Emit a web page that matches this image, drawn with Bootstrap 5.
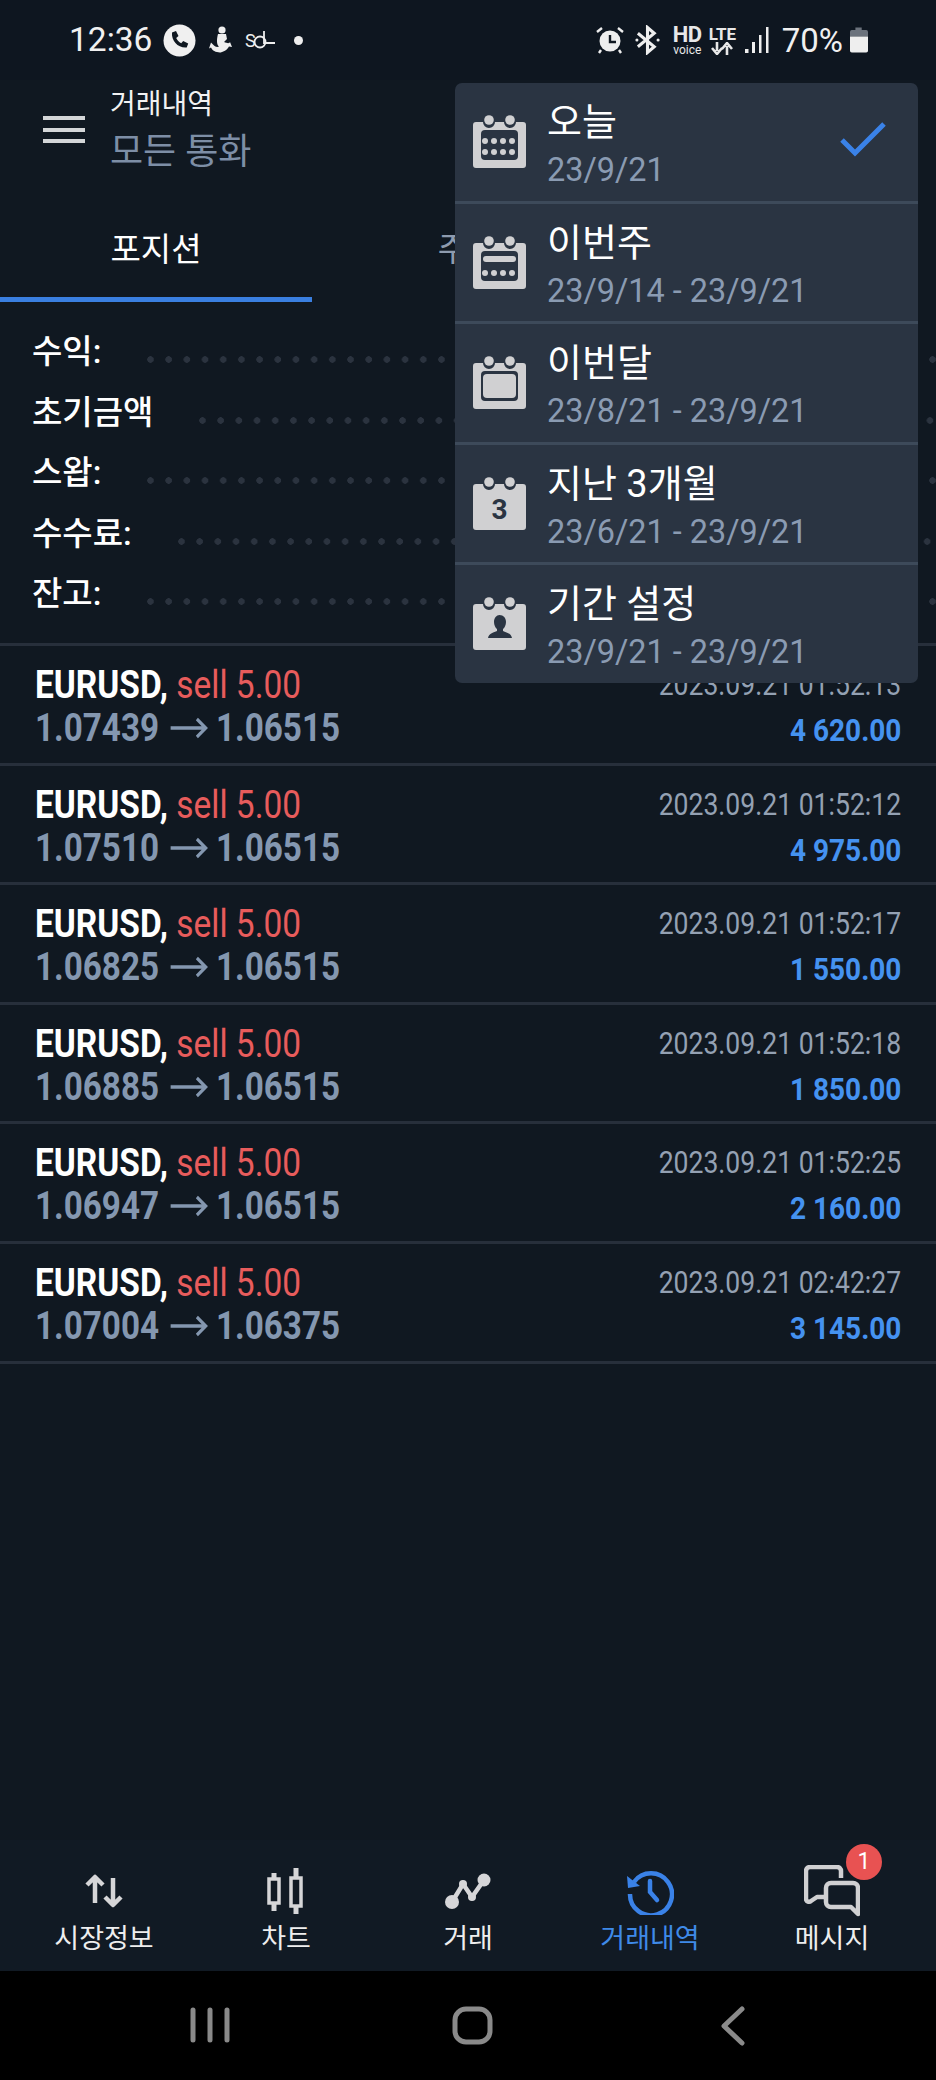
<!DOCTYPE html>
<html lang="ko">
<head>
  <meta charset="UTF-8">
  <meta name="viewport" content="width=device-width, initial-scale=1.0">
  <title>거래내역</title>
  <link href="https://cdn.jsdelivr.net/npm/bootstrap@5.3.0/dist/css/bootstrap.min.css" rel="stylesheet">
  <style>
    body { background: #101821; color: #fff; font-family: Roboto, "Noto Sans CJK KR", sans-serif; }
    .screen { width: 936px; height: 2080px; overflow: hidden; background: #101821; }
    .status-bar { height: 80px; padding: 0 68px 0 69px; background: #0e1620; }
    .status-time { font-size: 33.500px; color: #f0f0f0; line-height: 1; }
    .status-pct { font-size: 33px; color: #f0f0f0; line-height: 1; margin: 0 7px 0 13px; }
    .phone-ico { margin-left: 11px; }
    .anchor-ico { margin-left: 12px; }
    .sol-ico { margin-left: 11px; }
    .status-dot { width: 9px; height: 9px; background: #eee; margin-left: 19px; }
    .bt-ico { margin-left: 11px; }
    .hd-box { width: 29px; margin: 0 7px 0 13px; }
    .lte-box { width: 27px; margin-right: 9px; }
    .hd-text { font-size: 22px; font-weight: 700; line-height: 20px; color: #e8e8e8; letter-spacing: -.5px; }
    .voice-text { font-size: 12px; line-height: 11px; color: #e8e8e8; }
    .lte-text { font-size: 17px; font-weight: 700; line-height: 16px; color: #e8e8e8; }

    .top-head { height: 100px; padding-left: 43px; }
    .burger { width: 42px; height: 27px; border-top: 4px solid #d4d6d8; border-bottom: 4px solid #d4d6d8; position: relative; margin-top: -2px; }
    .burger::after { content: ""; position: absolute; left: 0; right: 0; top: 8px; height: 4px; background: #d4d6d8; }
    .head-title { font-size: 28px; line-height: 36px; color: #f2f2f2; margin-top: -2px; }
    .head-sub { font-size: 36px; line-height: 50px; color: #7d8ea6; margin-top: 4px; }
    .head-text { margin: 6px 0 0 25px; }

    .tabs-row { height: 122px; }
    .tab-item { width: 312px; padding-top: 46px; font-size: 33px; line-height: 48px; color: #8e9bae; text-align: center; }
    .tab-item.on { color: #fff; border-bottom: 5px solid #3a7fe0; }

    .summary-box { height: 344px; padding: 20px 0 0 32px; border-bottom: 3px solid #272f3b; }
    .sum-line { height: 60.5px; font-size: 33px; font-weight: 500; line-height: 60px; }
    .leader { margin-left: 46px; height: 7px; margin-top: 34px; background: radial-gradient(circle at 3.500px 3.500px, #2b333f 3px, transparent 3.500px) repeat-x; background-size: 18.2px 7px; }

    .trade-row { height: 119.6px; padding: 17px 35px 0 35px; border-bottom: 3px solid #272f3b; }
    .narrow { display: inline-block; transform: scaleX(.875); transform-origin: left center; white-space: nowrap; }
    .narrow.to-right { transform-origin: right center; }
    .pair-line { font-size: 38px; line-height: 44px; font-weight: 500; }
    .pair-line .narrow { transform: scaleX(.88); }
    .pair-name { font-weight: 700; color: #fff; }
    .sell-text { font-weight: 400; color: #e85c5c; }
    .price-line { font-size: 38px; line-height: 44px; font-weight: 700; color: #8497b0; margin-top: -1px; }
    .price-arrow { vertical-align: 1px; }
    .date-line { font-size: 32px; line-height: 44px; color: #94a1b3; margin-top: -1px; }
    .date-line .narrow { transform: scaleX(.83); }
    .amount-line { font-size: 32px; line-height: 44px; font-weight: 700; color: #4592f0; margin-top: 2px; }

    .period-menu { left: 455px; top: 83px; width: 463px; height: 600px; background: #2a3442; border-radius: 7px; z-index: 5; }
    .period-row { height: 120.6px; padding: 0 0 0 18px; border-bottom: 3px solid #3d4a5a; }
    .period-row:last-child { border-bottom: 0; }
    .period-title { font-size: 38px; line-height: 44px; color: #fff; padding-top: 17px; box-sizing: content-box; }
    .period-date { font-size: 32.400px; line-height: 42px; color: #8a9bb2; margin-top: 5px; }
    .period-text { margin-left: 21px; }
    .cal-ico { margin-top: 32px; flex-shrink: 0; }
    .check-mark { right: 31px; top: 38px; }

    .bottom-tabs { height: 131px; padding: 0 13px; background: #111a24; }
    .bottom-item { width: 182px; height: 131px; padding-top: 23px; font-size: 27px; line-height: 34px; color: #eee; text-align: center; }
    .bottom-item.on { color: #3f8ae8; }
    .bottom-ico { height: 56px; display: flex; align-items: center; justify-content: center; margin-bottom: 3px; }
    .msg-badge { left: 105px; top: 4px; width: 36px; height: 36px; border-radius: 50%; background: #e85252; color: #fff; font-size: 23px; line-height: 36px; text-align: center; }
    .sys-nav { height: 109px; background: #000; }
  </style>
</head>
<body>
  <svg width="0" height="0" class="position-absolute">
    <symbol id="calBase" viewBox="0 0 53 53">
      <path fill="#d0d0d2" d="M3 7h7a6 6 0 0 0 12 0h9a6 6 0 0 0 12 0h7a3 3 0 0 1 3 3v40a3 3 0 0 1-3 3H3a3 3 0 0 1-3-3V10a3 3 0 0 1 3-3z"/>
      <circle cx="16" cy="5" r="4.8" fill="#d0d0d2"/>
      <circle cx="37" cy="5" r="4.8" fill="#d0d0d2"/>
    </symbol>
    <symbol id="priceArrow" viewBox="0 0 65 24">
      <path d="M13 12h40M43 3l10 9-10 9" fill="none" stroke="#8497b0" stroke-width="3.600"/>
    </symbol>
  </svg>

  <div class="screen d-flex flex-column position-relative">
    <div class="status-bar d-flex align-items-center justify-content-between">
      <div class="d-flex align-items-center">
        <span class="status-time">12:36</span>
        <svg class="phone-ico" width="33" height="33" viewBox="0 0 33 33"><circle cx="16.5" cy="16.5" r="16" fill="#f0f0f0"/><path fill="#101821" d="M9 8.5l4-1.5 2.5 5-2.3 2c.9 2.2 2.8 4.2 5 5.2l2-2.3 5 2.6-1.5 4c-8.500.8-15.500-6.500-14.700-15z"/></svg>
        <svg class="anchor-ico" width="26" height="28" viewBox="0 0 24 28"><circle cx="13" cy="4" r="3.600" fill="#eee"/><path fill="#eee" d="M9 8h8l1 5-3 3c3 1 5 2 6 0l2 5-3-.500c-2 4-6 5-8 6-3 0-8-.500-10-5l-2 1 2-6 3 3c1 1 3 2 5 1-3-2-2-9-1-12.500z"/></svg>
        <svg class="sol-ico" width="30" height="20" viewBox="0 0 30 20"><text x="0" y="17" font-family="Roboto, sans-serif" font-size="18" fill="#eee">S</text><circle cx="15" cy="12" r="5.500" fill="none" stroke="#eee" stroke-width="1.800"/><path d="M19 1v12h11" fill="none" stroke="#eee" stroke-width="1.800"/></svg>
        <span class="status-dot rounded-circle"></span>
      </div>
      <div class="d-flex align-items-center">
        <svg width="28" height="28" viewBox="0 0 28 28"><circle cx="14" cy="15" r="10.500" fill="#eee"/><path d="M14 9v7h6" fill="none" stroke="#101821" stroke-width="2.400"/><path d="M1 6l5-4M27 6l-5-4M5 24l-2 3M23 24l2 3" stroke="#eee" stroke-width="2.400"/></svg>
        <svg class="bt-ico" width="25" height="30" viewBox="0 0 26 30"><path d="M3 8l17 14-7 6V2l7 6L3 22" fill="none" stroke="#eee" stroke-width="3.200"/><circle cx="2" cy="15" r="1.600" fill="#eee"/><circle cx="24" cy="15" r="1.600" fill="#eee"/></svg>
        <div class="hd-box text-center"><div class="hd-text">HD</div><div class="voice-text">voice</div></div>
        <div class="lte-box text-center"><div class="lte-text">LTE</div><svg class="d-block mx-auto" width="22" height="13" viewBox="0 0 22 13"><path d="M6 0v9M1 6l5 6 5-6M16 13V4M11 7l5-6 5 6" fill="none" stroke="#e8e8e8" stroke-width="2.600"/></svg></div>
        <svg width="24" height="27" viewBox="0 0 24 27"><rect x="0" y="22" width="3.500" height="4" fill="#eee"/><rect x="7" y="15" width="3" height="11" fill="#eee"/><rect x="14" y="8" width="2.500" height="18" fill="#eee"/><rect x="21" y="0" width="2.500" height="26" fill="#eee"/></svg>
        <span class="status-pct">70%</span>
        <svg width="18" height="28" viewBox="0 0 20 28"><path fill="#6b727c" d="M6 0h7v3h5a2 2 0 0 1 2 2v5H0V5a2 2 0 0 1 2-2h4z"/><path fill="#eee" d="M0 10h20v16a2 2 0 0 1-2 2H2a2 2 0 0 1-2-2z"/></svg>
      </div>
    </div>

    <div class="top-head d-flex align-items-center">
      <div class="burger"></div>
      <div class="head-text">
        <div class="head-title">거래내역</div>
        <div class="head-sub">모든 통화</div>
      </div>
    </div>

    <div class="tabs-row d-flex">
      <div class="tab-item on">포지션</div>
      <div class="tab-item">주문</div>
      <div class="tab-item">거래</div>
    </div>

    <div class="summary-box">
      <div class="sum-line d-flex"><span>수익:</span><div class="leader flex-grow-1"></div></div>
      <div class="sum-line d-flex"><span>초기금액</span><div class="leader flex-grow-1"></div></div>
      <div class="sum-line d-flex"><span>스왑:</span><div class="leader flex-grow-1"></div></div>
      <div class="sum-line d-flex"><span>수수료:</span><div class="leader flex-grow-1"></div></div>
      <div class="sum-line d-flex"><span>잔고:</span><div class="leader flex-grow-1"></div></div>
    </div>

    <div class="trade-row d-flex justify-content-between">
      <div>
        <div class="pair-line"><span class="narrow"><span class="pair-name">EURUSD,</span> <span class="sell-text">sell 5.00</span></span></div>
        <div class="price-line"><span class="narrow">1.07439<svg class="price-arrow" width="65" height="24"><use href="#priceArrow"/></svg>1.06515</span></div>
      </div>
      <div class="text-end">
        <div class="date-line"><span class="narrow to-right">2023.09.21 01:52:13</span></div>
        <div class="amount-line"><span class="narrow to-right">4 620.00</span></div>
      </div>
    </div>
    <div class="trade-row d-flex justify-content-between">
      <div>
        <div class="pair-line"><span class="narrow"><span class="pair-name">EURUSD,</span> <span class="sell-text">sell 5.00</span></span></div>
        <div class="price-line"><span class="narrow">1.07510<svg class="price-arrow" width="65" height="24"><use href="#priceArrow"/></svg>1.06515</span></div>
      </div>
      <div class="text-end">
        <div class="date-line"><span class="narrow to-right">2023.09.21 01:52:12</span></div>
        <div class="amount-line"><span class="narrow to-right">4 975.00</span></div>
      </div>
    </div>
    <div class="trade-row d-flex justify-content-between">
      <div>
        <div class="pair-line"><span class="narrow"><span class="pair-name">EURUSD,</span> <span class="sell-text">sell 5.00</span></span></div>
        <div class="price-line"><span class="narrow">1.06825<svg class="price-arrow" width="65" height="24"><use href="#priceArrow"/></svg>1.06515</span></div>
      </div>
      <div class="text-end">
        <div class="date-line"><span class="narrow to-right">2023.09.21 01:52:17</span></div>
        <div class="amount-line"><span class="narrow to-right">1 550.00</span></div>
      </div>
    </div>
    <div class="trade-row d-flex justify-content-between">
      <div>
        <div class="pair-line"><span class="narrow"><span class="pair-name">EURUSD,</span> <span class="sell-text">sell 5.00</span></span></div>
        <div class="price-line"><span class="narrow">1.06885<svg class="price-arrow" width="65" height="24"><use href="#priceArrow"/></svg>1.06515</span></div>
      </div>
      <div class="text-end">
        <div class="date-line"><span class="narrow to-right">2023.09.21 01:52:18</span></div>
        <div class="amount-line"><span class="narrow to-right">1 850.00</span></div>
      </div>
    </div>
    <div class="trade-row d-flex justify-content-between">
      <div>
        <div class="pair-line"><span class="narrow"><span class="pair-name">EURUSD,</span> <span class="sell-text">sell 5.00</span></span></div>
        <div class="price-line"><span class="narrow">1.06947<svg class="price-arrow" width="65" height="24"><use href="#priceArrow"/></svg>1.06515</span></div>
      </div>
      <div class="text-end">
        <div class="date-line"><span class="narrow to-right">2023.09.21 01:52:25</span></div>
        <div class="amount-line"><span class="narrow to-right">2 160.00</span></div>
      </div>
    </div>
    <div class="trade-row d-flex justify-content-between">
      <div>
        <div class="pair-line"><span class="narrow"><span class="pair-name">EURUSD,</span> <span class="sell-text">sell 5.00</span></span></div>
        <div class="price-line"><span class="narrow">1.07004<svg class="price-arrow" width="65" height="24"><use href="#priceArrow"/></svg>1.06375</span></div>
      </div>
      <div class="text-end">
        <div class="date-line"><span class="narrow to-right">2023.09.21 02:42:27</span></div>
        <div class="amount-line"><span class="narrow to-right">3 145.00</span></div>
      </div>
    </div>

    <div class="flex-grow-1"></div>

    <div class="bottom-tabs d-flex">
      <div class="bottom-item">
        <div class="bottom-ico"><svg width="38" height="34" viewBox="0 0 38 34"><path d="M10 29V4M2 11l8-8 8 8" fill="none" stroke="#d6d6d8" stroke-width="4.500" stroke-linejoin="round"/><path d="M28 4v26M20 23l8 8 8-8" fill="none" stroke="#d6d6d8" stroke-width="4.500" stroke-linejoin="round"/></svg></div>
        시장정보
      </div>
      <div class="bottom-item">
        <div class="bottom-ico"><svg width="38" height="46" viewBox="0 0 38 46"><path d="M7 5v38M29 0v46" stroke="#d6d6d8" stroke-width="5"/><rect x="2" y="11" width="10" height="24" fill="#111a24" stroke="#d6d6d8" stroke-width="3.500"/><rect x="24" y="10" width="10" height="28" fill="#111a24" stroke="#d6d6d8" stroke-width="3.500"/></svg></div>
        차트
      </div>
      <div class="bottom-item">
        <div class="bottom-ico"><svg width="46" height="36" viewBox="0 0 46 36"><path d="M7 29L18 11l9 13L39 7" fill="none" stroke="#d6d6d8" stroke-width="4.500"/><circle cx="7" cy="29" r="7" fill="#d6d6d8"/><circle cx="18" cy="11" r="4" fill="#d6d6d8"/><circle cx="27" cy="24" r="4" fill="#d6d6d8"/><circle cx="39" cy="7" r="6.500" fill="#d6d6d8"/></svg></div>
        거래
      </div>
      <div class="bottom-item on">
        <div class="bottom-ico"><svg width="48" height="48" viewBox="0 0 48 48"><path d="M8 15A21 21 0 1 1 4 27" fill="none" stroke="#3a82e8" stroke-width="4.500"/><path d="M1 9l1 12 12-2z" fill="#3a82e8"/><path d="M24 14v11l7 8" fill="none" stroke="#3a82e8" stroke-width="4.500" stroke-linecap="round"/></svg></div>
        거래내역
      </div>
      <div class="bottom-item position-relative">
        <div class="bottom-ico"><svg width="56" height="52" viewBox="0 0 56 52"><path d="M37 13V6a4 4 0 0 0-4-4H6a4 4 0 0 0-4 4v28a3 3 0 0 0 5 2l6-4h7" fill="none" stroke="#d0d0d2" stroke-width="4.500" stroke-linejoin="round"/><path d="M27 18h22a5 5 0 0 1 5 5v26l-7-7H27a5 5 0 0 1-5-5V23a5 5 0 0 1 5-5z" fill="none" stroke="#d0d0d2" stroke-width="4.500" stroke-linejoin="round"/></svg></div>
        메시지
        <span class="msg-badge position-absolute">1</span>
      </div>
    </div>

    <div class="sys-nav d-flex align-items-center justify-content-center">
      <svg width="600" height="40" viewBox="0 0 600 40">
        <path d="M25 4v30M42 4v30M59 4v30" stroke="#8a8a8a" stroke-width="5" stroke-linecap="round"/>
        <rect x="287" y="3" width="35" height="33" rx="11" fill="none" stroke="#8a8a8a" stroke-width="5"/>
        <path d="M574 3l-18 17 18 17" fill="none" stroke="#8a8a8a" stroke-width="5" stroke-linecap="round" stroke-linejoin="round"/>
      </svg>
    </div>

    <!-- 기간 선택 메뉴 -->
    <div class="period-menu position-absolute">
      <div class="period-row d-flex position-relative">
        <svg class="cal-ico" width="53" height="53" viewBox="0 0 53 53"><use href="#calBase" width="53" height="53"/><rect x="8" y="15" width="37" height="30" rx="4" fill="#2a3442"/><g fill="#d0d0d2"><circle cx="12" cy="26" r="3"/><circle cx="21" cy="26" r="3"/><circle cx="30" cy="26" r="3"/><circle cx="39" cy="26" r="3"/><circle cx="12" cy="37" r="3"/><circle cx="21" cy="37" r="3"/><circle cx="30" cy="37" r="3"/><circle cx="39" cy="37" r="3"/></g></svg>
        <div class="period-text"><div class="period-title">오늘</div><div class="period-date">23/9/21</div></div>
        <svg class="check-mark position-absolute" width="48" height="36" viewBox="0 0 48 36"><path d="M3 19l13 13L45 3" fill="none" stroke="#3a82e8" stroke-width="5"/></svg>
      </div>
      <div class="period-row d-flex">
        <svg class="cal-ico" width="53" height="53" viewBox="0 0 53 53"><use href="#calBase" width="53" height="53"/><rect x="8" y="15" width="37" height="30" rx="4" fill="#2a3442"/><rect x="10" y="20" width="33" height="6" rx="3" fill="#d0d0d2"/><g fill="#d0d0d2"><circle cx="12" cy="37" r="3"/><circle cx="21" cy="37" r="3"/><circle cx="30" cy="37" r="3"/><circle cx="39" cy="37" r="3"/></g></svg>
        <div class="period-text"><div class="period-title">이번주</div><div class="period-date">23/9/14 - 23/9/21</div></div>
      </div>
      <div class="period-row d-flex">
        <svg class="cal-ico" width="53" height="53" viewBox="0 0 53 53"><use href="#calBase" width="53" height="53"/><rect x="8" y="15" width="37" height="30" rx="4" fill="#2a3442"/><rect x="10" y="18" width="33" height="24" rx="4" fill="#d0d0d2"/></svg>
        <div class="period-text"><div class="period-title">이번달</div><div class="period-date">23/8/21 - 23/9/21</div></div>
      </div>
      <div class="period-row d-flex">
        <svg class="cal-ico" width="53" height="53" viewBox="0 0 53 53"><use href="#calBase" width="53" height="53"/><text x="26.500" y="42" text-anchor="middle" font-family="Roboto, sans-serif" font-weight="700" font-size="28" fill="#2a3442">3</text></svg>
        <div class="period-text"><div class="period-title">지난 3개월</div><div class="period-date">23/6/21 - 23/9/21</div></div>
      </div>
      <div class="period-row d-flex">
        <svg class="cal-ico" width="53" height="53" viewBox="0 0 53 53"><use href="#calBase" width="53" height="53"/><path fill="#2a3442" d="M26.500 18c4 0 6.500 3 6.500 7 0 3-1.500 6-3 7v2c3 1.500 8 2 9 7H15c1-5 6-5.500 9-7v-2c-1.500-1-3-4-3-7 0-4 2.500-7 5.500-7z"/></svg>
        <div class="period-text"><div class="period-title">기간 설정</div><div class="period-date">23/9/21 - 23/9/21</div></div>
      </div>
    </div>
  </div>
  <script src="https://cdn.jsdelivr.net/npm/bootstrap@5.3.0/dist/js/bootstrap.bundle.min.js"></script>
</body>
</html>
